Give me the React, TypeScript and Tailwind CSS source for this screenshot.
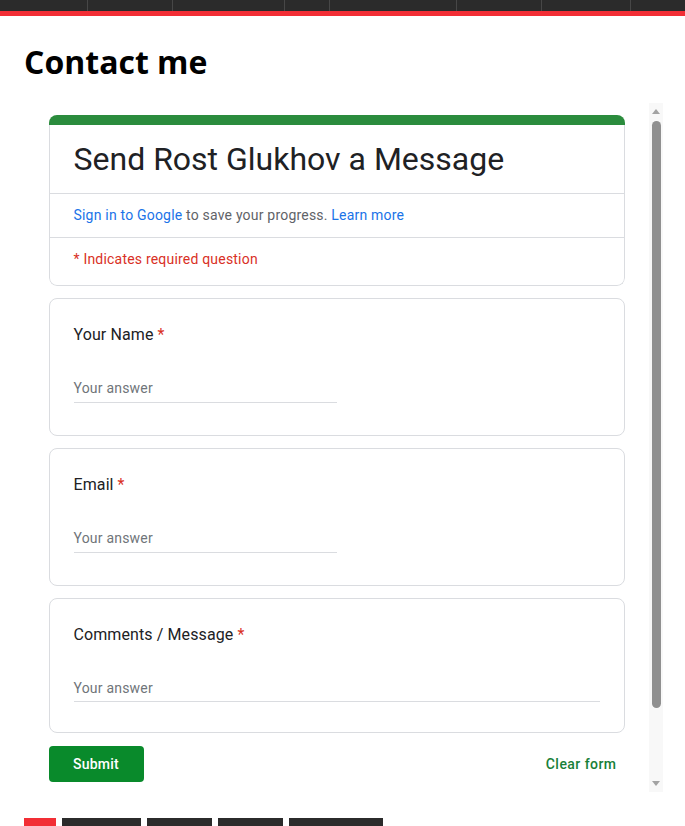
import React from "react";

const seps = [87, 172, 284, 329, 456, 541, 630];

function Question({ label, wide, last }: { label: string; wide?: boolean; last?: boolean }) {
  return (
    <div
      className={`bg-white border border-[#dadce0] rounded-[8px] px-6 pt-6 ${last ? "pb-[30px]" : "pb-[32px]"} mt-3`}
    >
      <div className="text-[16px] leading-6 text-[#202124] tracking-[0.1px]">
        {label}
        <span className="text-[#d93025] ml-[4px]">*</span>
      </div>
      <div
        className={`mt-[25px] pt-[2px] flex items-center border-b border-[#dadce0] ${wide ? "w-full" : "w-1/2"} ${last ? "h-[30px]" : "h-[31px]"}`}
      >
        <span className="text-[14px] leading-5 text-[#70757a] tracking-[0.2px]">Your answer</span>
      </div>
    </div>
  );
}

export default function App() {
  return (
    <div className="w-[685px] h-[826px] overflow-hidden bg-white" style={{ fontFamily: "Roboto, 'Noto Sans', sans-serif" }}>
      <div className="relative h-[11px] bg-[#2b2b2b]">
        {seps.map((x) => (
          <div key={x} className="absolute top-0 h-[11px] w-px bg-[#474747]" style={{ left: x }} />
        ))}
      </div>
      <div className="h-[5px] bg-[#f22e35]" />

      <div className="pl-6">
        <h1
          className="mt-[26px] h-10 leading-10 text-[32px] font-bold text-black"
          style={{ fontFamily: "'Open Sans', 'Noto Sans', sans-serif" }}
        >
          Contact me
        </h1>

        <div className="mt-[21px] flex h-[689px] w-[639px]">
          <div className="w-[625px] h-full overflow-hidden">
            <div className="w-[576px] mx-auto pt-3">
              <div className="rounded-[8px] overflow-hidden">
                <div className="h-[10px] bg-[#2b8c3d]" />
                <div className="border border-t-0 border-[#dadce0] rounded-b-[8px] bg-white">
                  <div className="px-6 py-[14px] border-b border-[#dadce0]">
                    <div className="text-[32px] leading-10 text-[#202124]">Send Rost Glukhov a Message</div>
                  </div>
                  <div className="px-6 pt-[11px] pb-[12px] border-b border-[#dadce0] text-[14px] leading-5 text-[#5f6368] tracking-[0.2px]">
                    <span className="text-[#1a73e8]">Sign in to Google</span> to save your progress.{" "}
                    <span className="text-[#1a73e8]">Learn more</span>
                  </div>
                  <div className="px-6 pt-[11px] pb-[16px] text-[14px] leading-5 text-[#d93025] tracking-[0.2px]">
                    * Indicates required question
                  </div>
                </div>
              </div>

              <Question label="Your Name" />
              <Question label="Email" />
              <Question label="Comments / Message" wide last />

              <div className="mt-[13px] flex items-center justify-between">
                <div className="w-[95px] h-[36px] rounded-[4px] bg-[#098a2b] flex items-center justify-center text-white text-[14px] font-medium tracking-[0.25px]">
                  Submit
                </div>
                <div className="mr-[8px] text-[14px] font-medium text-[#188038] tracking-[0.45px]">Clear form</div>
              </div>
            </div>
          </div>
          <div className="w-[14px] h-full bg-[#f8f8f8] flex flex-col items-center">
            <div className="mt-[6px] w-0 h-0 border-l-[4px] border-r-[4px] border-b-[5px] border-l-transparent border-r-transparent border-b-[#a3a3a3]" />
            <div className="mt-[7px] w-[9px] h-[587px] rounded-full bg-[#909090]" />
            <div className="mt-auto mb-[6px] w-0 h-0 border-l-[4px] border-r-[4px] border-t-[5px] border-l-transparent border-r-transparent border-t-[#a3a3a3]" />
          </div>
        </div>

        <div className="mt-[26px] flex gap-[6px]">
          <div className="w-[32px] h-[8px] bg-[#f22e35]" />
          <div className="w-[79px] h-[8px] bg-[#2b2b2b]" />
          <div className="w-[65px] h-[8px] bg-[#2b2b2b]" />
          <div className="w-[65px] h-[8px] bg-[#2b2b2b]" />
          <div className="w-[94px] h-[8px] bg-[#2b2b2b]" />
        </div>
      </div>
    </div>
  );
}
